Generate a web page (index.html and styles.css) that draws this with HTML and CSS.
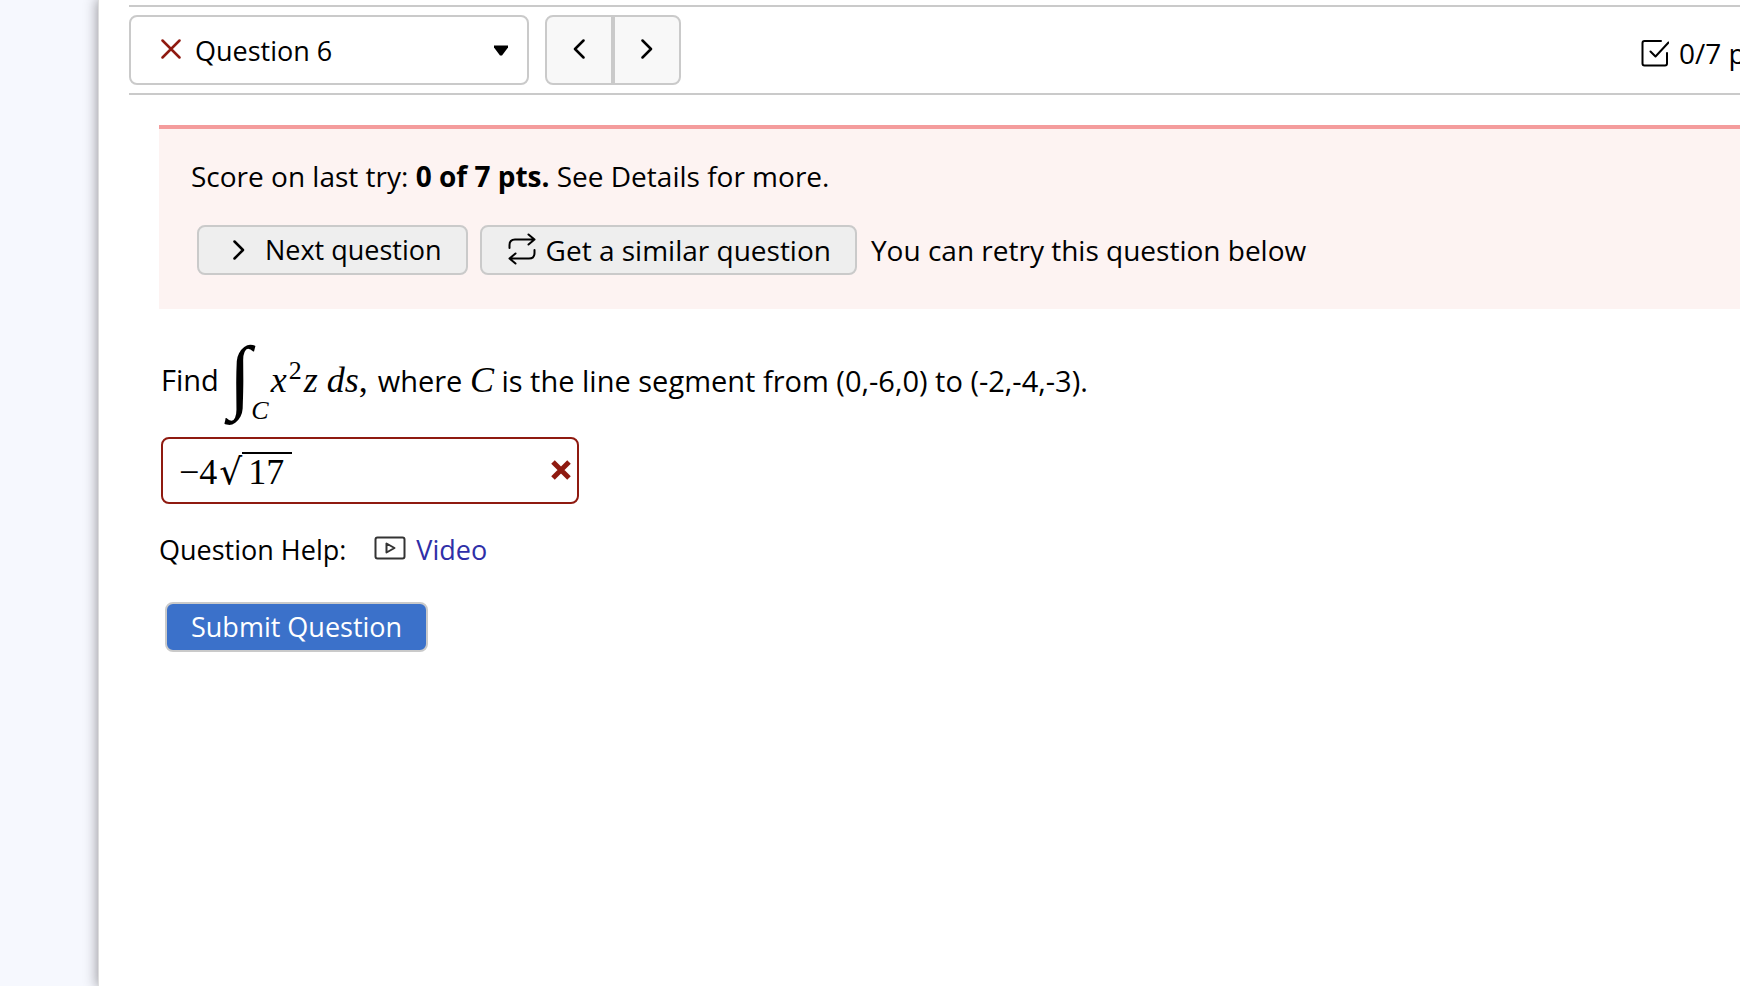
FILE: index.html
```html
<!DOCTYPE html>
<html lang="en">
<head>
    <meta charset="UTF-8">
    <meta name="viewport" content="width=device-width, initial-scale=1.0">
    <title>Question 6</title>
    <link rel="stylesheet" href="styles.css">
</head>
<body>
    <main class="page">
        <header class="question-bar">
            <div class="question-picker">
                <svg class="picker-status" viewBox="0 0 20 20" aria-hidden="true"><path d="M1.500 1.500 18.500 18.500M18.500 1.500 1.500 18.500"/></svg>
                <select class="question-select" aria-label="Select question">
                    <option>Question 6</option>
                </select>
                <svg class="picker-arrow" viewBox="0 0 14 10" aria-hidden="true"><path d="M0 0H14V2L8 10H6L0 2Z"/></svg>
            </div>
            <nav class="pager">
                <button class="pager-button" aria-label="Previous question">
                    <svg class="icon-chevron" viewBox="0 0 12 20" aria-hidden="true"><path d="M10.500 1.500 2 10 10.500 18.500"/></svg>
                </button>
                <button class="pager-button" aria-label="Next question">
                    <svg class="icon-chevron" viewBox="0 0 12 20" aria-hidden="true"><path d="M1.500 1.500 10 10 1.500 18.500"/></svg>
                </button>
            </nav>
            <div class="score">
                <svg class="icon-check" viewBox="0 0 28 28" aria-hidden="true"><path d="M20 2H3.500Q1.500 2 1.500 4V24.500Q1.500 26.500 3.500 26.500H24Q26 26.500 26 24.500V14M9.500 12.500 14.500 17.500 27.500 3.500"/></svg>
                <span>0/7 pts</span>
            </div>
        </header>

        <section class="notice">
            <p class="notice-text">Score on last try: <strong>0 of 7 pts.</strong> See Details for more.</p>
            <div class="notice-actions">
                <button class="button button-next">
                    <svg class="icon-chevron" viewBox="0 0 12 20" aria-hidden="true"><path d="M1.500 1.500 10 10 1.500 18.500"/></svg>
                    Next question
                </button>
                <button class="button button-similar">
                    <svg class="icon-repeat" viewBox="0 0 28 32" aria-hidden="true"><path d="M1.500 15V12Q1.500 6.500 7 6.500H26.500M20.500 1.500 26.500 6.500 20.500 11.500M26.500 17V20Q26.500 25.500 21 25.500H1.500M7.500 20.500 1.500 25.500 7.500 30.500"/></svg>
                    Get a similar question
                </button>
                <span class="notice-retry">You can retry this question below</span>
            </div>
        </section>

        <form class="question" onsubmit="return false">
            <p class="prompt">
                <span>Find</span>
                <span class="math">
                    <span class="integral">∫</span><sub class="bound">C</sub>
                    <span class="integrand"><i>x</i><sup>2</sup><i>z</i> <i>ds</i>,</span>
                </span>
                <span>where <i class="math-var">C</i> is the line segment from (0,-6,0) to (-2,-4,-3).</span>
            </p>

            <div class="answer">
                <div class="answer-input" role="textbox" contenteditable="true" spellcheck="false" aria-label="Answer">−4<span class="radical">√</span><span class="radicand">17</span></div>
                <svg class="answer-status" viewBox="0 0 20 20" aria-hidden="true"><path d="M2 2 18 18M18 2 2 18"/></svg>
            </div>

            <p class="help">
                <span>Question Help:</span>
                <a class="help-link" href="#">
                    <svg class="icon-video" viewBox="0 0 32 24" aria-hidden="true"><rect x="1.500" y="1.500" width="29" height="21" rx="2"/><path d="M12.500 7.500V16.500L20.500 12Z"/></svg>
                    Video
                </a>
            </p>

            <button class="button button-submit" type="submit">Submit Question</button>
        </form>
    </main>
</body>
</html>
```
FILE: styles.css
```css
:root {
    --side-bg: #f6f8fe;
    --border: #cacaca;
    --error: #8f1a10;
    --link: #2f2fa8;
    --text-font: "Trebuchet MS", "Open Sans", sans-serif;
    --math-font: "Liberation Serif", serif;
}

* {
    margin: 0;
    padding: 0;
    box-sizing: border-box;
}

body {
    font-family: var(--text-font);
    font-size: 28px;
    line-height: 36px;
    color: #000;
    background: var(--side-bg);
    overflow-x: hidden;
}

svg {
    flex: none;
    fill: none;
    stroke: currentColor;
    stroke-width: 3;
    stroke-linecap: round;
    stroke-linejoin: round;
}

button,
select {
    font: inherit;
    font-size: 27px;
    color: inherit;
    cursor: pointer;
}

.page {
    margin-left: 98px;
    min-height: 100vh;
    padding: 5px 0 40px 30px;
    border-left: 1px solid #ddd;
    background: #fff;
    box-shadow: 0 0 12px 1px rgba(40, 35, 40, 0.45);
}

.question-bar {
    display: flex;
    align-items: center;
    gap: 16px;
    height: 90px;
    border-top: 2px solid var(--border);
    border-bottom: 2px solid var(--border);
}

.question-picker {
    position: relative;
    width: 400px;
}

.question-select {
    width: 100%;
    height: 70px;
    padding-top: 2px;
    padding-left: 64px;
    border: 2px solid var(--border);
    border-radius: 8px;
    background: #fff;
    appearance: none;
}

.picker-status {
    position: absolute;
    top: 24px;
    left: 32px;
    width: 20px;
    height: 20px;
    color: var(--error);
    stroke-width: 2.5;
    pointer-events: none;
}

.picker-arrow {
    position: absolute;
    top: 30px;
    right: 21px;
    width: 14px;
    height: 11px;
    fill: #000;
    stroke: none;
    pointer-events: none;
}

.pager {
    display: flex;
}

.pager-button {
    display: flex;
    align-items: center;
    justify-content: center;
    width: 68px;
    height: 70px;
    padding-bottom: 2px;
    border: 2px solid var(--border);
    background: #f8f8f8;
}

.pager-button:first-child {
    border-radius: 8px 0 0 8px;
}

.pager-button:last-child {
    border-radius: 0 8px 8px 0;
}

.icon-chevron {
    width: 12px;
    height: 20px;
    stroke-width: 2.5;
}

.score {
    display: flex;
    align-items: center;
    gap: 10px;
    margin-left: auto;
    margin-right: -29px;
    padding-top: 6px;
    white-space: nowrap;
}

.icon-check {
    width: 28px;
    height: 28px;
    stroke-width: 2;
}

.notice {
    margin: 30px 0 0 30px;
    padding: 29px 32px 34px;
    border-top: 4px solid #f49c9c;
    background: #fdf3f2;
}

.notice-actions {
    display: flex;
    align-items: center;
    gap: 12px;
    margin: 31px 0 0 6px;
}

.button {
    display: flex;
    align-items: center;
    gap: 10px;
    height: 50px;
    padding: 0 24px;
    border: 2px solid var(--border);
    border-radius: 8px;
    background: #eee;
    white-space: nowrap;
}

.button-next {
    gap: 20px;
    padding-left: 34px;
}

.button-similar {
    padding-left: 26px;
    font-size: 28px;
}

.icon-repeat {
    width: 28px;
    height: 32px;
    margin-bottom: 2px;
    stroke-width: 2;
}

.notice-retry {
    padding-left: 2px;
}

.question {
    padding: 32px 32px 0;
}

.prompt {
    display: flex;
    align-items: center;
    gap: 10px;
    height: 78px;
    font-size: 29px;
    white-space: nowrap;
}

.math {
    display: flex;
    align-items: center;
    font-family: var(--math-font);
    font-size: 36px;
}

.integral {
    padding-bottom: 8px;
    font-size: 82px;
    font-style: italic;
    line-height: 70px;
}

.bound {
    align-self: flex-end;
    font-size: 26px;
    font-style: italic;
    line-height: 16px;
}

.integrand {
    padding-left: 2px;
}

.integrand sup {
    padding: 0 2px;
    font-size: 26px;
    line-height: 0;
}

.math-var {
    font-family: var(--math-font);
    font-size: 36px;
    line-height: 36px;
}

.answer {
    position: relative;
    width: 418px;
    margin-top: 18px;
}

.answer-input {
    height: 67px;
    padding: 0 40px 0 16px;
    border: 2px solid var(--error);
    border-radius: 8px;
    font-family: var(--math-font);
    font-size: 36px;
    line-height: 66px;
    white-space: nowrap;
    overflow: hidden;
}

.radical {
    padding-left: 2px;
    font-family: "DejaVu Serif", serif;
    line-height: 36px;
}

.radicand {
    display: inline-block;
    padding: 0 8px 0 6px;
    border-top: 2px solid #000;
    line-height: 36px;
}

.answer-status {
    position: absolute;
    top: 23px;
    right: 8px;
    width: 20px;
    height: 20px;
    color: var(--error);
    stroke-width: 5;
    stroke-linecap: butt;
}

.help {
    display: flex;
    gap: 28px;
    margin: 28px 0 34px -2px;
    font-size: 27px;
}

.help-link {
    display: flex;
    align-items: center;
    gap: 10px;
    color: var(--link);
    text-decoration: none;
}

.icon-video {
    width: 32px;
    height: 24px;
    margin-bottom: 4px;
    color: #333;
    stroke-width: 2;
}

.button-submit {
    margin-left: 4px;
    background: #3b71ca;
    color: #fff;
}
```
